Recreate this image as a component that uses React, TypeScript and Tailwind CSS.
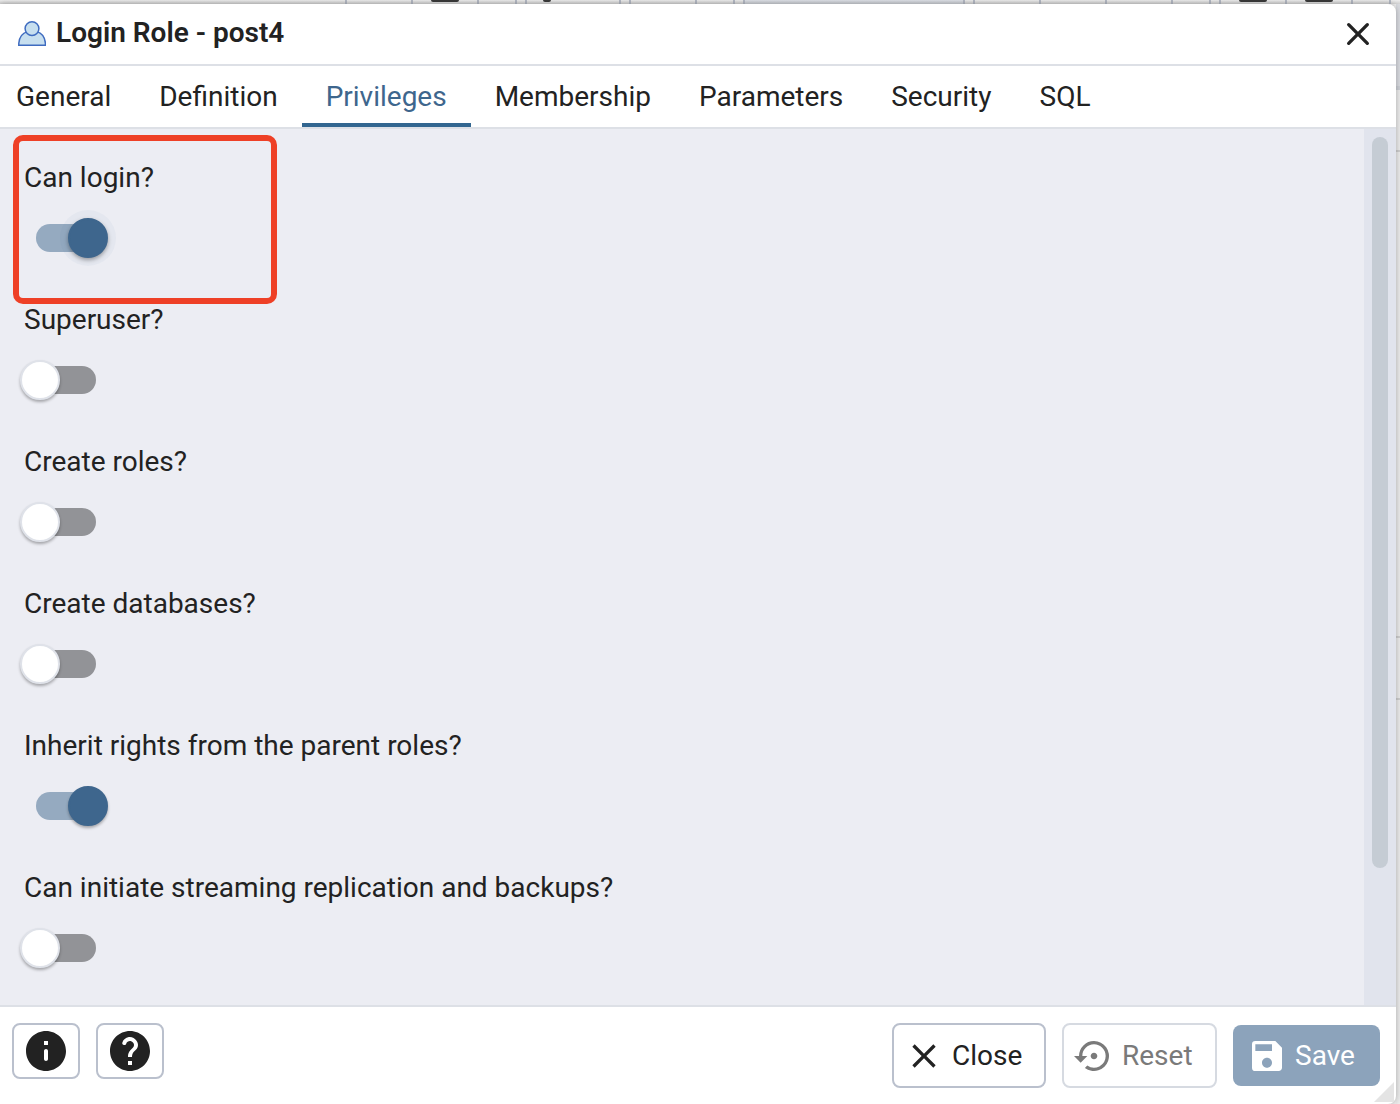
import React, { useState } from 'react';
import { MdClose, MdSave, MdSettingsBackupRestore } from 'react-icons/md';

const TABS = ['General', 'Definition', 'Privileges', 'Membership', 'Parameters', 'Security', 'SQL'];

const FIELDS = [
  { id: 'rolcanlogin', label: 'Can login?', value: true, focused: true },
  { id: 'rolsuper', label: 'Superuser?', value: false },
  { id: 'rolcreaterole', label: 'Create roles?', value: false },
  { id: 'rolcreatedb', label: 'Create databases?', value: false },
  { id: 'rolinherit', label: 'Inherit rights from the parent roles?', value: true },
  { id: 'rolreplication', label: 'Can initiate streaming replication and backups?', value: false },
];

// Toolbar groups that peek out above the dialog: one width per button
const TOOLBAR = [
  [{ w: 'w-[66px]' }, { w: 'w-[66px]', mark: 'w-7' }, { w: 'w-[38px]' }],
  [{ w: 'w-[94px]', mark: 'w-2', start: true }],
  [{ w: 'w-[66px]' }, { w: 'w-[38px]' }],
  [{ w: 'w-[220px]', flat: true }],
  [{ w: 'w-[66px]' }, { w: 'w-[66px]' }, { w: 'w-[66px]' }, { w: 'w-[38px]' }],
  [{ w: 'w-[66px]', mark: 'w-7' }, { w: 'w-[66px]', mark: 'w-7' }, { w: 'w-[38px]' }],
];

function RoleIcon() {
  return (
    <svg className="h-7 w-7" viewBox="0 0 28 28" fill="#c7dfef" stroke="#3f6cc0" strokeWidth="1.5">
      <path d="M.8 25.200v-2C1.300 17.600 4.400 13 9.400 11.600h9.400c5 1.400 8.100 6 8.600 11.600v2z" />
      <circle cx="14" cy="8.600" r="6.900" />
    </svg>
  );
}

function CloseRoundedIcon() {
  return (
    <svg className="h-10 w-10" viewBox="0 0 24 24" fill="currentColor">
      <path d="M18.3 5.71a.996.996 0 0 0-1.41 0L12 10.59 7.11 5.7a.996.996 0 1 0-1.41 1.41L10.59 12 5.7 16.89a.996.996 0 1 0 1.41 1.41L12 13.41l4.89 4.89a.996.996 0 1 0 1.41-1.41L13.41 12l4.89-4.89c.38-.38.38-1.020 0-1.400z" />
    </svg>
  );
}

function InfoIcon() {
  return (
    <svg className="h-12 w-12" viewBox="0 0 24 24" fill="currentColor">
      <path d="M12 2C6.480 2 2 6.480 2 12s4.480 10 10 10 10-4.480 10-10S17.520 2 12 2zm0 15c-.55 0-1-.45-1-1v-4c0-.55.45-1 1-1s1 .45 1 1v4c0 .55-.45 1-1 1zm1-8h-2V7h2v2z" />
    </svg>
  );
}

function HelpIcon() {
  return (
    <svg className="h-12 w-12" viewBox="0 0 24 24" fill="currentColor">
      <path d="M12 2C6.480 2 2 6.480 2 12s4.480 10 10 10 10-4.480 10-10S17.520 2 12 2zm1 17h-2v-2h2v2zm2.070-7.750l-.9.920c-.5.510-.860.970-1.040 1.690-.080.320-.130.680-.130 1.140h-2v-.5c0-.460.080-.9.220-1.310.2-.580.530-1.100.950-1.520l1.240-1.260c.460-.440.680-1.100.550-1.800-.130-.720-.690-1.330-1.390-1.530-1.110-.310-2.140.320-2.470 1.270-.120.370-.430.650-.820.650h-.3C8.4 9 8 8.440 8.160 7.880c.430-1.470 1.680-2.590 3.230-2.830 1.520-.240 2.970.550 3.870 1.800 1.180 1.630.830 3.380-.190 4.400z" />
    </svg>
  );
}

function SwitchField({ id, label, value, focused }: { id: string; label: string; value: boolean; focused?: boolean }) {
  const [checked, setChecked] = useState(value);
  const thumbShadow = focused
    ? 'before:shadow-[0_0_0_8px_rgba(50,102,144,0.04),0_2px_4px_rgba(0,0,0,0.35)]'
    : 'before:shadow-[0_2px_3px_rgba(0,0,0,0.3)]';

  return (
    <div className="flex flex-col items-start gap-[26px]">
      <label htmlFor={id} className="leading-10">{label}</label>
      <input
        id={id}
        type="checkbox"
        role="switch"
        checked={checked}
        onChange={(e) => setChecked(e.target.checked)}
        className={`relative ml-1 h-7 w-[68px] appearance-none rounded-full bg-[#929397] outline-none before:absolute before:-left-2 before:-top-1.5 before:h-10 before:w-10 before:rounded-full before:border-2 before:border-[#dfe2e9] before:bg-white checked:ml-3 checked:bg-[#95aac0] checked:before:left-8 checked:before:border-[#3e668d] checked:before:bg-[#3e668d] ${thumbShadow}`}
      />
    </div>
  );
}

function App() {
  const [activeTab, setActiveTab] = useState('Privileges');

  return (
    <div className="flex h-screen flex-col bg-[#f0f0f0] font-[Roboto,sans-serif] text-[28px] text-[#222222]">
      {/* Page toolbar behind the dialog */}
      <div className="flex h-1 shrink-0 justify-end gap-2 overflow-hidden bg-linear-to-b from-[#eeeeee] to-[#d2d2d2] pr-[9px]">
        {TOOLBAR.map((group, i) => (
          <div key={i} className="flex border-r-2 border-[#b4b9c4]">
            {group.map((cell, j) => (
              <div
                key={j}
                className={`flex items-start border-l-2 border-[#b4b9c4] ${cell.w} ${cell.start ? 'justify-start pl-4' : 'justify-center'} ${cell.flat ? 'bg-[#b9c4d8]/30' : ''}`}
              >
                {cell.mark && <div className={`h-0.5 rounded-b-sm bg-[#3a3a3a] ${cell.mark}`} />}
              </div>
            ))}
          </div>
        ))}
      </div>

      <div className="flex min-h-0 flex-1">
        <div role="dialog" aria-labelledby="dialog-title" className="relative flex min-w-0 flex-1 flex-col rounded-r-lg bg-white shadow-[0_0_6px_rgba(0,0,0,0.3)]">
          {/* Header */}
          <header className="flex h-[62px] shrink-0 items-center justify-between border-b-2 border-[#dde0e6] px-[18px]">
            <div className="flex items-center gap-2.5">
              <RoleIcon />
              <h1 id="dialog-title" className="pb-0.5 font-semibold leading-9">Login Role - post4</h1>
            </div>
            <button aria-label="Close dialog">
              <CloseRoundedIcon />
            </button>
          </header>

          {/* Tabs */}
          <div role="tablist" className="-ml-2 flex h-[63px] shrink-0 border-b-2 border-[#dde0e6]">
            {TABS.map((tab) => (
              <button
                key={tab}
                role="tab"
                aria-selected={tab === activeTab}
                onClick={() => setActiveTab(tab)}
                className={`border-b-4 px-6 pt-1 ${tab === activeTab ? 'border-[#326690] text-[#3e668d]' : 'border-transparent'}`}
              >
                {tab}
              </button>
            ))}
          </div>

          {/* Privileges */}
          <div className="flex min-h-0 flex-1">
            <div className="relative flex-1 overflow-hidden bg-[#ecedf3] px-6 pt-[29px]">
              <div className="flex flex-col gap-12">
                {FIELDS.map((field) => (
                  <SwitchField key={field.id} {...field} />
                ))}
              </div>
              <div className="pointer-events-none absolute left-[13px] top-1.5 h-[169px] w-[264px] rounded-[10px] border-6 border-[#ee4026]" />
            </div>
            <div className="w-8 bg-[#e1e4ed] p-2">
              <div className="h-[85%] rounded-full bg-[#c5ccd4]" />
            </div>
          </div>

          {/* Footer */}
          <footer className="flex shrink-0 items-start justify-between border-t-2 border-[#dde0e6] py-4 pl-3 pr-4">
            <div className="flex gap-4">
              <button aria-label="SQL help" className="flex h-14 w-[68px] items-center justify-center rounded-lg border-2 border-[#bac0cd]">
                <InfoIcon />
              </button>
              <button aria-label="Dialog help" className="flex h-14 w-[68px] items-center justify-center rounded-lg border-2 border-[#bac0cd]">
                <HelpIcon />
              </button>
            </div>
            <div className="flex items-center gap-4">
              <button className="flex h-[65px] w-[154px] items-center gap-2 rounded-lg border-2 border-[#bac0cd] pl-2.5">
                <MdClose className="h-10 w-10" />
                Close
              </button>
              <button disabled className="flex h-[65px] w-[155px] items-center gap-2 rounded-lg border-2 border-[#d6dae1] pl-2.5 text-[#7a7a7a]">
                <MdSettingsBackupRestore className="h-10 w-10" />
                Reset
              </button>
              <button disabled className="flex h-[61px] w-[147px] items-center gap-2 rounded-lg bg-[#8ca3bb] pl-3.5 text-white">
                <MdSave className="h-10 w-10" />
                Save
              </button>
            </div>
          </footer>

          {/* Resize handle */}
          <svg className="absolute bottom-0.5 right-0.5 h-5 w-5" viewBox="0 0 20 20" fill="#e4e4e4">
            <path d="M20 0V20H0z" />
          </svg>
        </div>

        {/* Page content right of the dialog */}
        <div className="flex w-1 shrink-0 flex-col bg-[#ececec]">
          <div className="h-[86px] border-b-4 border-[#cdd0d6] bg-[#d9dbe0]" />
          <div className="h-[62px] border-b-2 border-[#cfcfcf]" />
          <div className="h-[486px] border-b-2 border-[#cfcfcf]" />
          <div className="h-[62px] border-b-2 border-[#cfcfcf]" />
        </div>
      </div>
    </div>
  );
}

export default App;
